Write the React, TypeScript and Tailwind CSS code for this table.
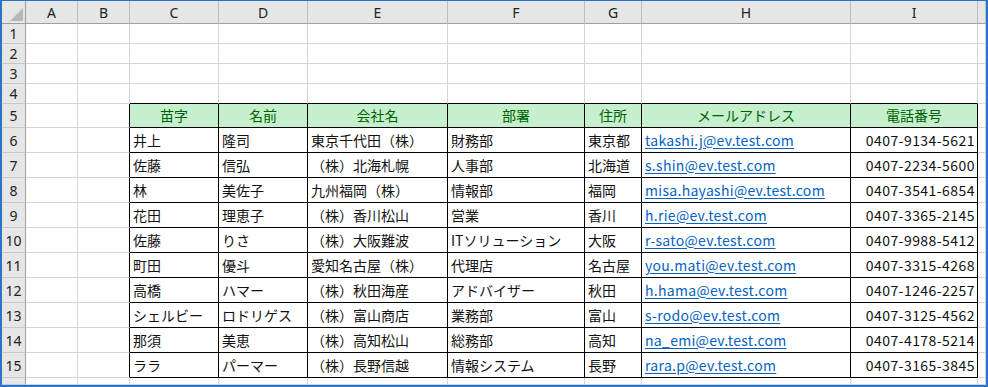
import React from "react";

const cols = ["A", "B", "C", "D", "E", "F", "G", "H", "I", ""];

const heads = ["苗字", "名前", "会社名", "部署", "住所", "メールアドレス", "電話番号"];

const rows = [
    ["井上", "隆司", "東京千代田（株）", "財務部", "東京都", "takashi.j@ev.test.com", "0407-9134-5621"],
    ["佐藤", "信弘", "（株）北海札幌", "人事部", "北海道", "s.shin@ev.test.com", "0407-2234-5600"],
    ["林", "美佐子", "九州福岡（株）", "情報部", "福岡", "misa.hayashi@ev.test.com", "0407-3541-6854"],
    ["花田", "理恵子", "（株）香川松山", "営業", "香川", "h.rie@ev.test.com", "0407-3365-2145"],
    ["佐藤", "りさ", "（株）大阪難波", "ITソリューション", "大阪", "r-sato@ev.test.com", "0407-9988-5412"],
    ["町田", "優斗", "愛知名古屋（株）", "代理店", "名古屋", "you.mati@ev.test.com", "0407-3315-4268"],
    ["高橋", "ハマー", "（株）秋田海産", "アドバイザー", "秋田", "h.hama@ev.test.com", "0407-1246-2257"],
    ["シェルビー", "ロドリゲス", "（株）富山商店", "業務部", "富山", "s-rodo@ev.test.com", "0407-3125-4562"],
    ["那須", "美恵", "（株）高知松山", "総務部", "高知", "na_emi@ev.test.com", "0407-4178-5214"],
    ["ララ", "パーマー", "（株）長野信越", "情報システム", "長野", "rara.p@ev.test.com", "0407-3165-3845"],
];

const jp = "font-['Noto_Sans_CJK_JP','Noto_Sans',sans-serif]";

const RowHead = ({ n }: { n: string }) => (
    <div className="flex items-center justify-center bg-[#e6e6e6] border-r border-b border-r-[#9e9e9e] border-b-[#c8c8c8] text-[14px] text-[#222] font-['Noto_Sans',sans-serif]">
        {n}
    </div>
);

const Blank = ({ black = "" }: { black?: string }) => (
    <div className={"bg-white border-r border-b border-[#d4d4d4] " + black} />
);

const App = () => {
    return (
        <div className="w-[988px] h-[387px] bg-white border-l-2 border-r-2 border-t border-b-2 border-[#2b73c4] overflow-hidden">
            <div className="grid grid-cols-[24px_52px_52px_89px_89px_140px_137px_57px_209px_127px_1fr] grid-rows-[23px_20px_20px_20px_20px_24px_repeat(10,25px)_1fr] h-full">
                {/* column headers */}
                <div className="relative bg-[#e6e6e6] border-r border-b border-r-[#9e9e9e] border-b-[#9e9e9e]">
                    <svg className="absolute right-[2px] bottom-[2px]" width="13" height="13" viewBox="0 0 13 13">
                        <polygon points="13,0 13,13 0,13" fill="#b7b7b7" />
                    </svg>
                </div>
                {cols.map((c, i) => (
                    <div
                        key={i}
                        className="flex items-center justify-center bg-[#e6e6e6] border-r border-b border-r-[#bdbdbd] border-b-[#9e9e9e] text-[14px] text-[#222] font-['Noto_Sans',sans-serif]"
                    >
                        {c}
                    </div>
                ))}

                {/* rows 1-4 */}
                {["1", "2", "3", "4"].map((n) => (
                    <React.Fragment key={n}>
                        <RowHead n={n} />
                        {cols.map((c, i) => (
                            <Blank
                                key={i}
                                black={n === "4" && i >= 2 && i <= 8 ? "border-b-black" : ""}
                            />
                        ))}
                    </React.Fragment>
                ))}

                {/* row 5 header */}
                <RowHead n="5" />
                <Blank />
                <Blank black="border-r-black" />
                {heads.map((h, i) => (
                    <div
                        key={i}
                        className={"flex items-center justify-center bg-[#c6efce] border-r border-b border-black text-[14px] text-[#006100] " + jp}
                    >
                        {h}
                    </div>
                ))}
                <Blank />

                {/* data rows */}
                {rows.map((r, ri) => (
                    <React.Fragment key={ri}>
                        <RowHead n={String(ri + 6)} />
                        <Blank />
                        <Blank black="border-r-black" />
                        {r.map((v, ci) => (
                            <div
                                key={ci}
                                className={
                                    "flex items-center bg-white border-r border-b border-black text-[14px] whitespace-nowrap overflow-hidden " +
                                    jp +
                                    (ci === 6 ? " justify-end pr-[2px] tracking-[0.45px] text-[#111]" : " pl-[3px] text-[#111]")
                                }
                            >
                                {ci === 5 ? (
                                    <span className="text-[#0563c1] underline underline-offset-2 tracking-[0.3px]">{v}</span>
                                ) : (
                                    v
                                )}
                            </div>
                        ))}
                        <Blank />
                    </React.Fragment>
                ))}

                {/* row 16 partial */}
                <RowHead n="" />
                {cols.map((c, i) => (
                    <Blank key={i} />
                ))}
            </div>
        </div>
    );
};

export default App;
